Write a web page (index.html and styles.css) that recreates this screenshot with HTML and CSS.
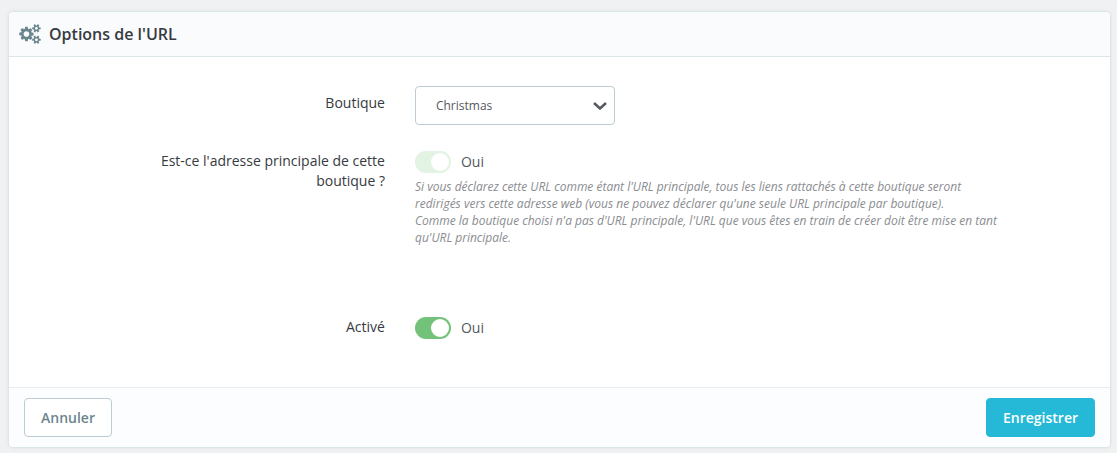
FILE: index.html
```html
<!DOCTYPE html>
<html lang="fr">
<head>
<meta charset="utf-8">
<meta name="viewport" content="width=device-width, initial-scale=1">
<title>Options de l'URL</title>
<link rel="stylesheet" href="styles.css">
</head>
<body>
<form class="card">
  <h1 class="card-header">
    <svg class="cogs" viewBox="0 0 1920 1792" aria-hidden="true"><path d="M896 896q0-106-75-181t-181-75-181 75-75 181 75 181 181 75 181-75 75-181zm768 512q0-52-38-90t-90-38-90 38-38 90q0 53 37.500 90.500t90.500 37.500 90.500-37.500 37.500-90.500zm0-1024q0-52-38-90t-90-38-90 38-38 90q0 53 37.500 90.500t90.500 37.500 90.500-37.500 37.500-90.500zm-384 421v185q0 10-7 19.500t-16 10.500l-155 24q-11 35-32 76 34 48 90 115 7 11 7 20 0 12-7 19-23 30-82.500 89.500t-78.500 59.500q-11 0-21-7l-115-90q-37 19-77 31-11 108-23 155-7 24-30 24h-186q-11 0-20-7.500t-10-17.500l-23-153q-34-10-75-31l-118 89q-7 7-20 7-11 0-21-8-144-133-144-160 0-9 7-19 10-14 41-53t47-61q-23-44-35-82l-152-24q-10-1-17-9.500t-7-19.500v-185q0-10 7-19.500t16-10.500l155-24q11-35 32-76-34-48-90-115-7-11-7-20 0-12 7-20 22-30 82-89t79-59q11 0 21 7l115 90q34-18 77-32 11-108 23-154 7-24 30-24h186q11 0 20 7.500t10 17.500l23 153q34 10 75 31l118-89q8-7 20-7 11 0 21 8 144 133 144 160 0 8-7 19-12 16-42 54t-45 60q23 48 34 82l152 23q10 2 17 10.500t7 19.500zm640 533v140q0 16-149 31-12 27-30 52 51 113 51 138 0 4-4 7-122 71-124 71-8 0-46-47t-52-68q-20 2-30 2t-30-2q-14 21-52 68t-46 47q-2 0-124-71-4-3-4-7 0-25 51-138-18-25-30-52-149-15-149-31v-140q0-16 149-31 13-29 30-52-51-113-51-138 0-4 4-7 4-2 35-20t59-34 30-16q8 0 46 46.500t52 67.500q20-2 30-2t30 2q51-71 92-112l6-2q4 0 124 70 4 3 4 7 0 25-51 138 17 23 30 52 149 15 149 31zm0-1024v140q0 16-149 31-12 27-30 52 51 113 51 138 0 4-4 7-122 71-124 71-8 0-46-47t-52-68q-20 2-30 2t-30-2q-14 21-52 68t-46 47q-2 0-124-71-4-3-4-7 0-25 51-138-18-25-30-52-149-15-149-31v-140q0-16 149-31 13-29 30-52-51-113-51-138 0-4 4-7 4-2 35-20t59-34 30-16q8 0 46 46.500t52 67.500q20-2 30-2t30 2q51-71 92-112l6-2q4 0 124 70 4 3 4 7 0 25-51 138 17 23 30 52 149 15 149 31z"/></svg>
    <span>Options de l'URL</span>
  </h1>
  <div class="card-body">
    <div class="row">
      <label class="label label-select" for="shop">Boutique</label>
      <div class="select-wrap">
        <select class="select" id="shop"><option>Christmas</option></select>
        <svg class="chevron" viewBox="0 0 14 8" aria-hidden="true"><path d="M1 1l6 5.500 6-5.500"/></svg>
      </div>
    </div>
    <div class="row">
      <label class="label" for="main-url">Est-ce l'adresse principale de cette boutique ?</label>
      <div>
        <div class="toggle">
          <input class="switch" type="checkbox" role="switch" id="main-url" aria-describedby="main-help" checked disabled>
          <span>Oui</span>
        </div>
        <p class="help" id="main-help">Si vous déclarez cette URL comme étant l'URL principale, tous les liens rattachés à cette boutique seront redirigés vers cette adresse web (vous ne pouvez déclarer qu'une seule URL principale par boutique).<br>Comme la boutique choisi n'a pas d'URL principale, l'URL que vous êtes en train de créer doit être mise en tant qu'URL principale.</p>
      </div>
    </div>
    <div class="row row-last">
      <label class="label" for="enabled">Activé</label>
      <div class="toggle">
        <input class="switch" type="checkbox" role="switch" id="enabled" checked>
        <span>Oui</span>
      </div>
    </div>
  </div>
  <div class="card-footer">
    <button class="btn btn-outline" type="button">Annuler</button>
    <button class="btn btn-primary" type="submit">Enregistrer</button>
  </div>
</form>
</body>
</html>
```

FILE: styles.css
```css
* {
  box-sizing: border-box;
}

body {
  margin: 0;
  padding: 11px 6px 5px 8px;
  background: #eff1f2;
  color: #363a41;
  font: 14px/20px "Open Sans", "Noto Sans", sans-serif;
}

.card {
  background: #fff;
  border: 1px solid #dbe6e9;
  border-radius: 5px;
  box-shadow: 0 0 4px rgba(0, 0, 0, 0.06);
}

.card-header {
  display: flex;
  align-items: center;
  gap: 8px;
  margin: 0;
  padding: 10px;
  border-bottom: 1px solid #dbe6e9;
  border-radius: 4px 4px 0 0;
  background: #fafbfc;
  font-size: 16px;
  font-weight: 600;
  line-height: 24px;
}

.cogs {
  width: 22px;
  height: 20px;
  fill: #6c868e;
}

.card-body {
  width: 80%;
  margin: 0 auto;
  padding: 29px 0 48px;
}

.row {
  display: grid;
  grid-template-columns: 5fr 11fr;
  column-gap: 30px;
  margin-bottom: 26px;
}

.row-last {
  margin: 71px 0 0;
}

.label {
  text-align: right;
}

.label-select {
  padding-top: 7px;
}

.select-wrap {
  position: relative;
  width: 200px;
}

.select {
  appearance: none;
  display: block;
  width: 100%;
  height: 39px;
  padding: 0 30px 0 20px;
  border: 1px solid #bbcdd2;
  border-radius: 4px;
  background: #fff;
  color: #54585d;
  font: inherit;
  font-size: 12px;
}

.chevron {
  position: absolute;
  top: 16px;
  right: 8px;
  width: 14px;
  height: 8px;
  fill: none;
  stroke: #54585d;
  stroke-width: 2.5;
  pointer-events: none;
}

.toggle {
  display: flex;
  align-items: center;
  gap: 10px;
  height: 22px;
  color: #54585d;
}

.switch {
  appearance: none;
  width: 36px;
  height: 22px;
  margin: 0;
  padding: 2px;
  border-radius: 11px;
  background: #b3c7cd;
}

.switch::before {
  content: "";
  display: block;
  width: 18px;
  height: 18px;
  border-radius: 50%;
  background: #fff;
}

.switch:checked {
  padding-left: 16px;
  background: #72c279;
}

.switch:disabled {
  opacity: 0.2;
}

.help {
  margin: 5px 0 0;
  color: #8a8c90;
  font-size: 12px;
  font-style: italic;
  line-height: 17px;
}

.card-footer {
  display: flex;
  justify-content: space-between;
  padding: 10px 15px;
  border-top: 1px solid #e8edef;
  border-radius: 0 0 4px 4px;
  background: #fcfdfe;
}

.btn {
  padding: 8px 16px;
  border: 1px solid #25b9d7;
  border-radius: 4px;
  font: inherit;
  font-weight: 600;
  line-height: 21px;
  cursor: pointer;
}

.btn-outline {
  border-color: #bbcdd2;
  background: #fff;
  color: #6c868e;
}

.btn-primary {
  background: #25b9d7;
  color: #fff;
}
```
